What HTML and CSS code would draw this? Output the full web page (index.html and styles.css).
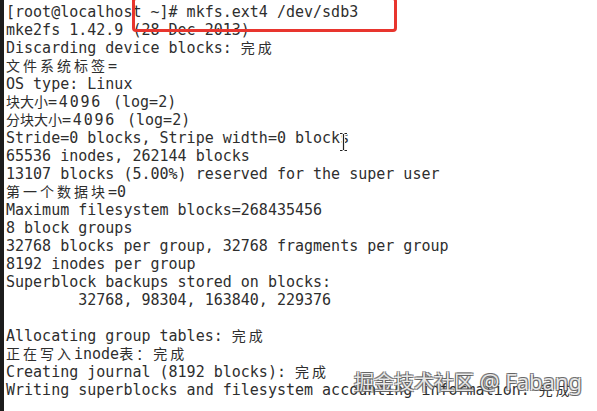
FILE: index.html
```html
<!DOCTYPE html>
<html>
<head>
<meta charset="utf-8">
<link rel="stylesheet" href="styles.css">
</head>
<body>
<div class="screen">
  <div class="edge"></div>
  <pre class="term">[root@localhost ~]# mkfs.ext4 /dev/sdb3
mke2fs 1.42.9 (28-Dec-2013)
Discarding device blocks: <span class="cjk">完成</span>
<span class="cjk">文件系统标签</span>=
OS type: Linux
<span class="cjk narrow">块大小</span><span class="wide">=4096 </span>(log=2)
<span class="cjk narrow">分块大小</span><span class="wide">=4096 </span>(log=2)
Stride=0 blocks, Stripe width=0 blocks
65536 inodes, 262144 blocks
13107 blocks (5.00%) reserved for the super user
<span class="cjk">第一个数据块</span>=0
Maximum filesystem blocks=268435456
8 block groups
32768 blocks per group, 32768 fragments per group
8192 inodes per group
Superblock backups stored on blocks:
        32768, 98304, 163840, 229376

Allocating group tables: <span class="cjk">完成</span>
<span class="cjk">正在写入</span>inode<span class="cjk">表：完成</span>
Creating journal (8192 blocks): <span class="cjk">完成</span>
Writing superblocks and filesystem accounting information: <span class="cjk">完成</span></pre>
  <div class="highlight"></div>
  <svg class="ibeam" width="9" height="20" viewBox="0 0 9 20">
    <path d="M1 1.5h2.5M5.5 1.5h2.5M4.5 2v16M1 18.5h2.5M5.5 18.5h2.5" stroke="#fff" stroke-width="3" fill="none"/>
    <path d="M1 1.5h2.5M5.5 1.5h2.5M4.5 2v16M1 18.5h2.5M5.5 18.5h2.5" stroke="#222" stroke-width="1.2" fill="none"/>
  </svg>
  <div class="watermark"><span class="wm-cjk">掘金技术社区</span> @ Fabang</div>
</div>
</body>
</html>
```
FILE: styles.css
```css
html, body {
  margin: 0;
  padding: 0;
  background: #ffffff;
}
.screen {
  position: relative;
  width: 597px;
  height: 411px;
  overflow: hidden;
  display: flex;
  background: #ffffff;
}
.edge {
  width: 4px;
  flex: none;
  background: #1c1c1c;
}
.term {
  margin: 0;
  padding: 3px 0 0 2px;
  font-family: "DejaVu Sans Mono", monospace;
  font-size: 15px;
  line-height: 18px;
  color: #2e2e2e;
  white-space: pre;
}
.cjk {
  font-family: "Noto Sans CJK SC", sans-serif;
  font-size: 14px;
  line-height: 0;
  letter-spacing: 3px;
}
.cjk.narrow {
  letter-spacing: 0;
}
.wide {
  letter-spacing: 1.8px;
}
.highlight {
  position: absolute;
  left: 132px;
  top: -3px;
  width: 259px;
  height: 29px;
  border: 3px solid #e8352e;
  border-radius: 4px;
}
.ibeam {
  position: absolute;
  left: 339px;
  top: 132px;
}
.watermark {
  position: absolute;
  left: 354px;
  top: 368px;
  font-family: "Noto Sans", sans-serif;
  font-size: 22px;
  line-height: 26px;
  color: rgba(255, 255, 255, 0.85);
  text-shadow: 1px 1px 0 rgba(90,90,90,0.75), -1px -1px 0 rgba(90,90,90,0.75), 1px -1px 0 rgba(90,90,90,0.75), -1px 1px 0 rgba(90,90,90,0.75);
  white-space: nowrap;
}
.wm-cjk {
  font-family: "Noto Sans CJK SC", sans-serif;
  font-size: 20px;
}
```
